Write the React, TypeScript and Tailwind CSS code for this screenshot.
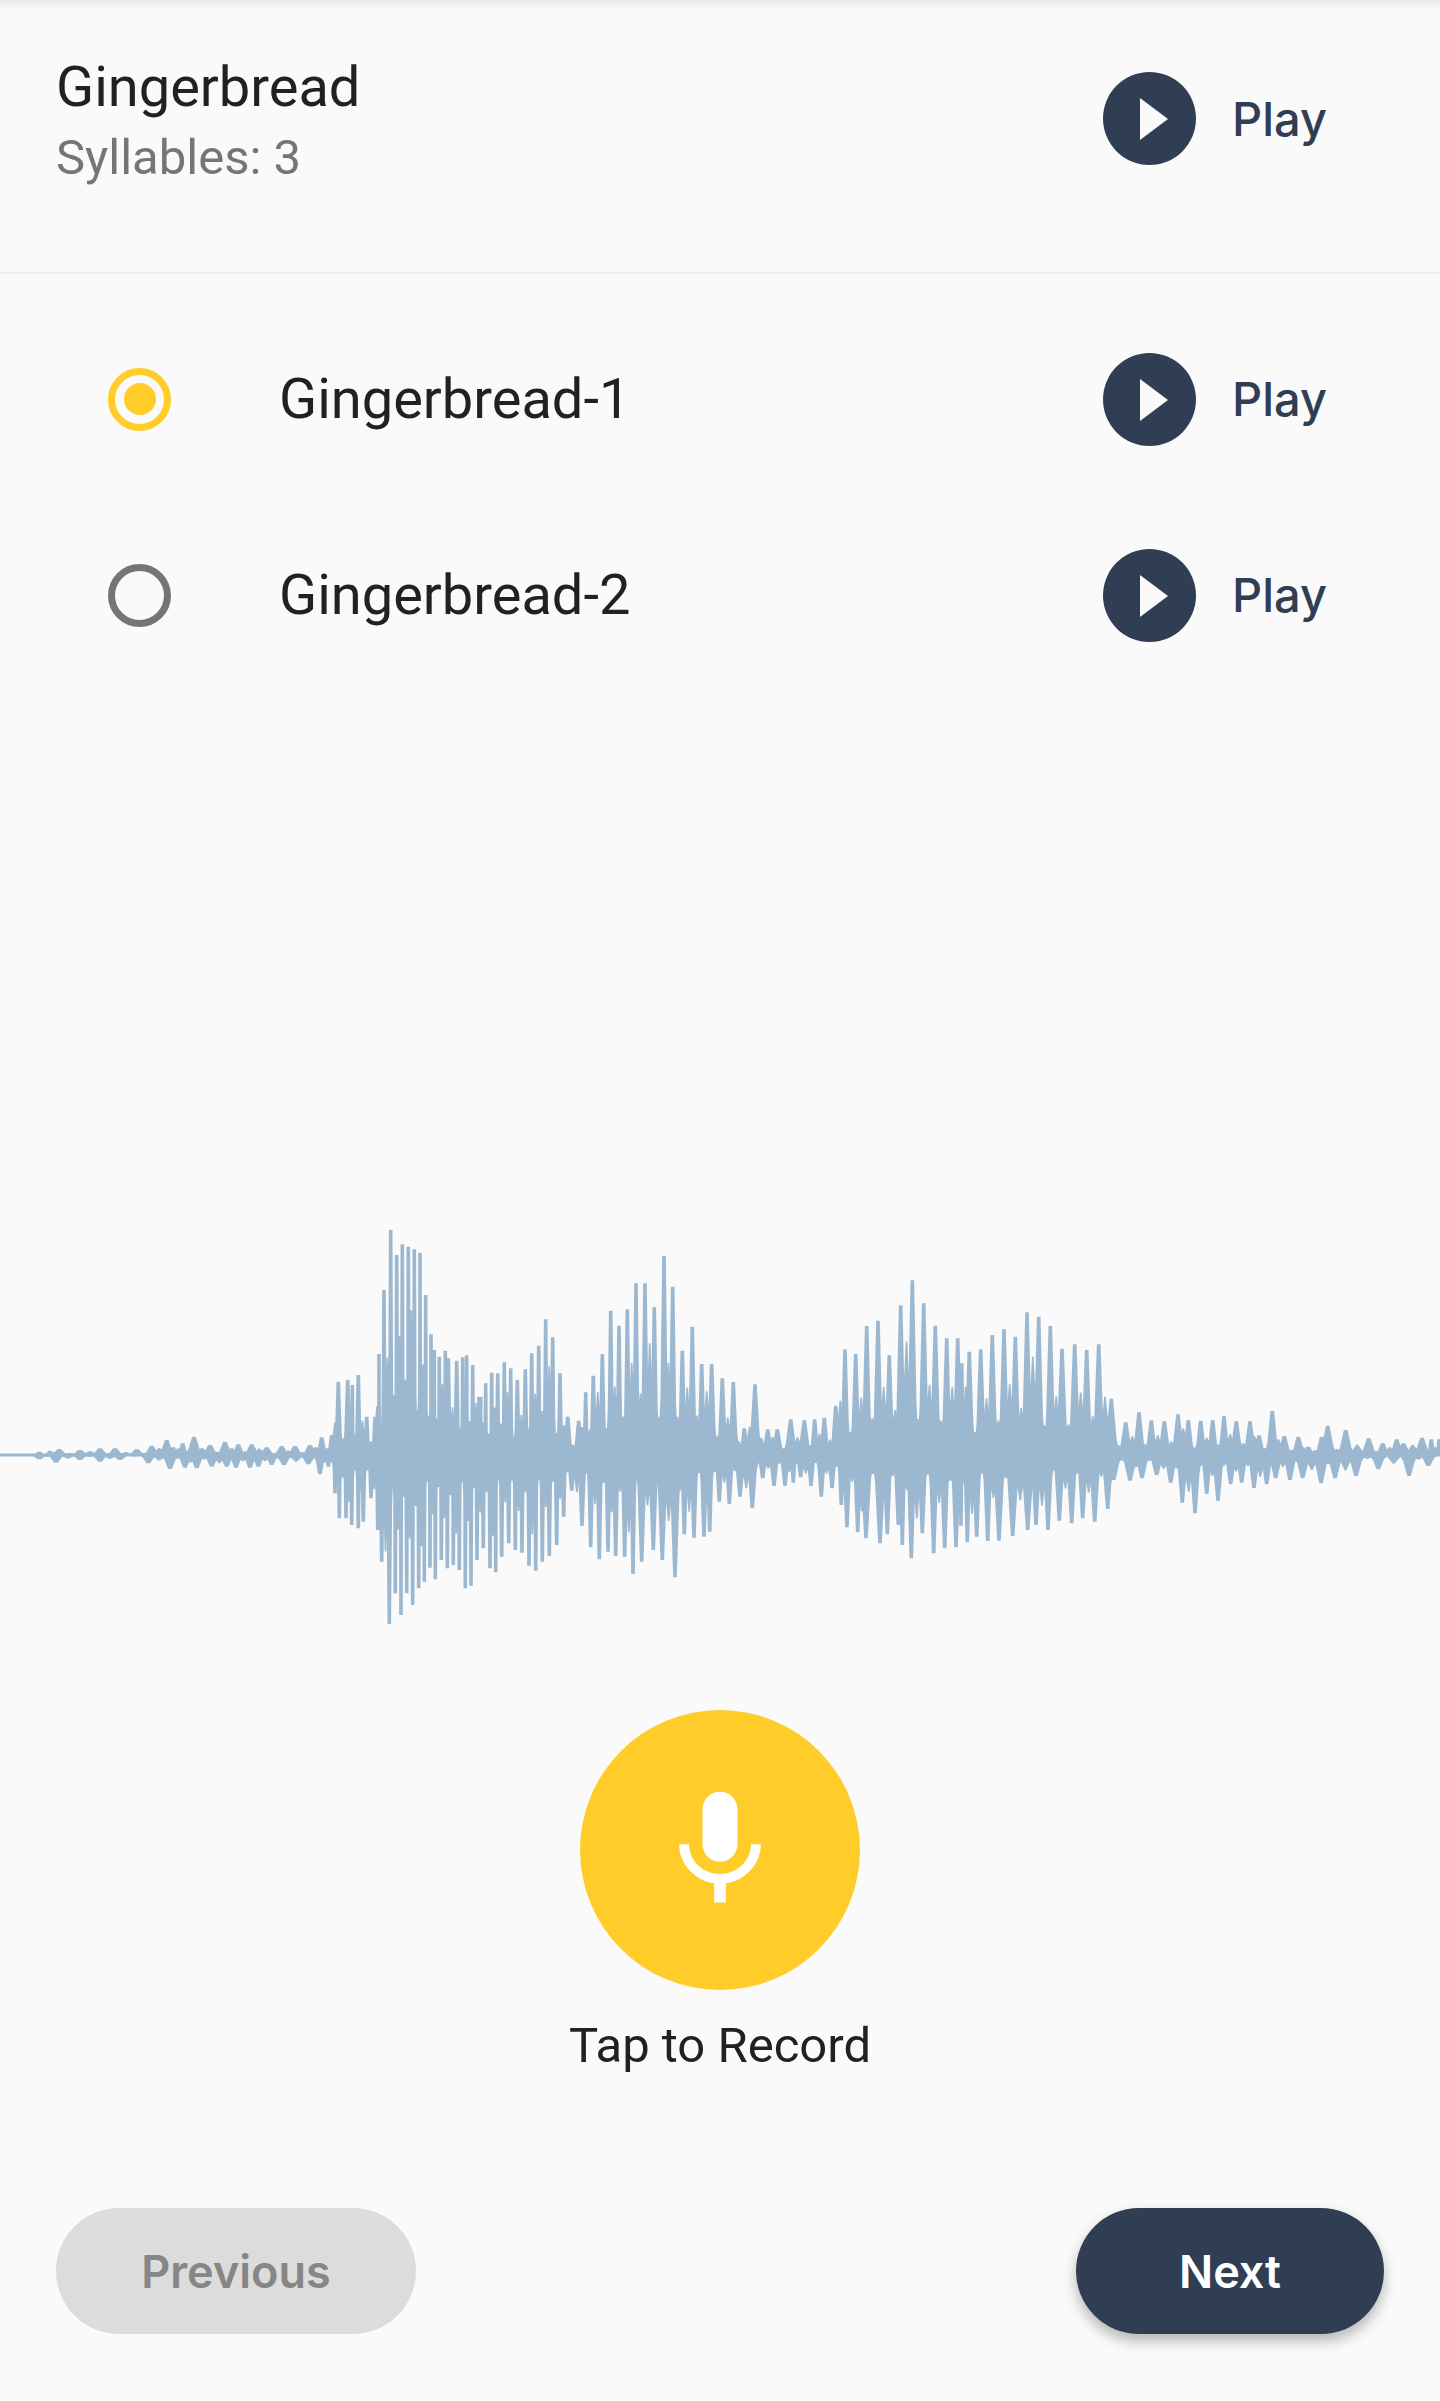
const WAVE_TOP: [number, number[]][] = [
  [0, [118,755,150,752,178,747,240,750,300,745,345,745,410,748,455,737,500,720,520,742,548,730,582,710,630,735,675,725,715,733,755,733,800,742,845,738,885,738,930,735,965,712,995,705,1015,545,1043,540,1057,555,1075,525,1100,650,1125,650,1137,462,1152,270,1172,90,1190,165,1207,133,1225,140,1243,148,1260,158,1277,285,1293,403,1303,450,1318,470,1336,452,1345,475,1370,482,1388,472,1400,466,1418,495,1437,590]],
  [480, [2,590,17,550,35,518,53,520,73,487,92,505,112,540,136,508,155,460,176,437,197,358,218,412,240,520,263,650,296,662,317,577,340,527,367,462,392,332,417,377,442,328,468,250,495,250,523,322,552,167,578,260,607,452,637,380,665,492,695,492,727,535,760,546,793,685,825,553,863,688,892,688,932,658,973,660,1004,658,1033,653,1067,617,1095,448,1127,462,1160,378,1194,362,1228,466,1262,316,1297,241,1331,310,1366,377,1400,415,1433,415]],
  [960, [5,490,28,455,62,448,97,405,132,388,166,410,201,337,236,350,271,378,306,446,344,433,380,450,416,433,454,596,497,667,537,637,574,661,613,664,654,643,685,660,722,662,758,660,792,648,829,664,870,664,897,706,937,632,973,708,1015,710,1045,740,1085,710,1103,677,1157,690,1226,715,1268,730,1310,718,1330,730,1386,713,1414,718,1437,718]],
]

const WAVE_BOTTOM: [number, number[]][] = [
  [0, [118,778,168,788,240,780,300,785,360,780,445,790,510,807,555,803,590,805,635,800,680,800,708,803,750,803,775,800,815,795,852,795,925,793,960,823,985,800,1005,880,1018,955,1038,955,1055,975,1075,985,1090,965,1113,895,1133,990,1145,1085,1168,1272,1186,1180,1203,1245,1220,1180,1238,1215,1256,1165,1273,1145,1290,1103,1306,1138,1324,1080,1342,1105,1360,1095,1378,1110,1396,1165,1413,1157,1431,1080]],
  [480, [10,1045,30,1105,47,1117,65,1070,86,1030,106,1050,126,1058,147,1097,167,1112,187,1085,208,1068,230,1035,251,950,275,872,306,978,332,1042,358,1078,384,1055,407,1068,434,1070,459,1122,485,1085,520,1050,547,1080,585,1132,613,1003,642,1013,672,1010,689,995,718,905,748,912,780,890,817,925,848,835,882,858,915,858,940,848,962,832,993,858,1024,890,1056,865,1084,915,1101,982,1133,997,1158,1015,1200,1030,1222,1003,1255,975,1267,1035,1294,1075,1327,1000,1361,1060,1394,1045,1428,1042]],
  [960, [3,977,22,1027,50,1010,83,1023,117,1022,158,1008,203,990,228,975,264,990,298,962,335,970,368,955,404,965,443,927,461,840,510,842,546,835,590,825,632,848,667,908,705,940,740,882,774,903,812,853,845,848,882,864,920,853,947,835,990,840,1028,835,1083,850,1125,835,1188,828,1255,808,1347,828,1405,798]],
]

// secondary peak heights, cycled so the body of the wave stays uneven
const SECONDARY = [0.28, 0.58, 0.36, 0.7, 0.22, 0.5]

// peaks were read off 3x crops, so turn them back into svg units
function peaks(parts: [number, number[]][]) {
  const out: { x: number; y: number }[] = []
  for (const [x0, list] of parts) {
    for (let i = 0; i < list.length; i += 2) {
      out.push({ x: x0 + list[i] / 3, y: list[i + 1] / 3 })
    }
  }
  return out
}

function spikes(parts: [number, number[]][]) {
  const mid = 255
  const list = peaks(parts)
  let d = ''
  list.forEach((p, i) => {
    const prev = list[i - 1] ?? p
    const next = list[i + 1] ?? p
    const gap = Math.min(Math.max(next.x - p.x, p.x - prev.x, 3), 16)
    const shoulder = mid + (p.y - mid) * 0.3
    const sw = Math.max(gap * 0.36, 1.9)
    d += `M${(p.x - gap * 0.6).toFixed(1)} ${mid}L${(p.x - sw).toFixed(1)} ${shoulder.toFixed(1)}L${(p.x - 1.8).toFixed(1)} ${p.y.toFixed(1)}L${(p.x + 1.8).toFixed(1)} ${p.y.toFixed(1)}L${(p.x + sw).toFixed(1)} ${shoulder.toFixed(1)}L${(p.x + gap * 0.6).toFixed(1)} ${mid}Z`
    // shorter secondary peak between the main ones
    if (next !== p) {
      const mx = (p.x + next.x) / 2
      const my = mid + ((p.y + next.y) / 2 - mid) * SECONDARY[i % SECONDARY.length]
      d += `M${(mx - gap * 0.5).toFixed(1)} ${mid}L${(mx - 0.8).toFixed(1)} ${my.toFixed(1)}L${(mx + 0.8).toFixed(1)} ${my.toFixed(1)}L${(mx + gap * 0.5).toFixed(1)} ${mid}Z`
    }
  })
  return d
}

function Waveform() {
  return (
    <svg className="block w-full h-[460px]" viewBox="0 0 1440 460">
      <rect x="0" y="253.5" width="1440" height="3" fill="#9bb8d0" />
      <path d={spikes(WAVE_TOP)} fill="#9bb8d0" />
      <path d={spikes(WAVE_BOTTOM)} fill="#9bb8d0" />
    </svg>
  )
}

function PlayButton() {
  return (
    <div className="w-[337px] flex items-center gap-[36px] shrink-0">
      <svg className="w-[93px] h-[93px] shrink-0" viewBox="0 0 93 93">
        <circle cx="46.5" cy="46.5" r="46.5" fill="#303e54" />
        <polygon points="37,26 65,47 37,68" fill="#fafafa" />
      </svg>
      <span className="font-[Inter] font-medium text-[47px] leading-[56px] text-[#303e54]">Play</span>
    </div>
  )
}

function Radio({ selected }: { selected?: boolean }) {
  return (
    <div
      className={`w-[63px] h-[63px] rounded-full border-[7px] flex items-center justify-center ${
        selected ? 'border-[#ffcc29]' : 'border-[#757575]'
      }`}
    >
      {selected && <div className="w-[32px] h-[32px] rounded-full bg-[#ffcc29]" />}
    </div>
  )
}

function SyllableRow({ label, selected }: { label: string; selected?: boolean }) {
  return (
    <div className="h-[196px] flex items-center justify-between pl-[108px]">
      <div className="flex items-center">
        <Radio selected={selected} />
        <span className="ml-[108px] text-[56px] leading-[66px] text-[#212121]">{label}</span>
      </div>
      <PlayButton />
    </div>
  )
}

export default function App() {
  return (
    <div className="relative w-full h-[2401px] overflow-hidden bg-[#fafafa] font-[Roboto]">
      <div className="absolute top-0 inset-x-0 h-[10px] bg-gradient-to-b from-[#e8e8e8] to-transparent" />

      <div className="h-[274px] flex items-start justify-between border-b-2 border-[#eeeeee] pl-[56px]">
        <div className="pt-[54px]">
          <div className="text-[56px] leading-[66px] text-[#212121]">Gingerbread</div>
          <div className="mt-[10px] text-[49px] leading-[56px] text-[#757575]">Syllables: 3</div>
        </div>
        <div className="mt-[72px]">
          <PlayButton />
        </div>
      </div>

      <div className="mt-[27px]">
        <SyllableRow label="Gingerbread-1" selected />
        <SyllableRow label="Gingerbread-2" />
      </div>

      <div className="mt-[507px]">
        <Waveform />
      </div>

      <div className="mt-[50px] flex flex-col items-center">
        <div className="w-[280px] h-[280px] rounded-full bg-[#ffcc29] flex items-center justify-center">
          <svg className="w-[140px] h-[140px]" viewBox="0 0 24 24" fill="#ffffff">
            <path d="M12 14c1.66 0 2.99-1.34 2.99-3L15 5c0-1.66-1.34-3-3-3S9 3.34 9 5v6c0 1.66 1.34 3 3 3zm5.3-3c0 3-2.54 5.1-5.3 5.1S6.7 14 6.7 11H5c0 3.41 2.72 6.23 6 6.72V21h2v-3.28c3.28-.48 6-3.3 6-6.72h-1.7z" />
          </svg>
        </div>
        <div className="mt-[28px] text-[49px] leading-[56px] text-[#212121]">Tap to Record</div>
      </div>

      <div className="mt-[134px] flex justify-between px-[56px]">
        <div className="w-[360px] h-[126px] pt-[2px] rounded-full bg-[#dcdcdc] flex items-center justify-center font-[Inter] font-semibold text-[45px] text-[#868686]">
          Previous
        </div>
        <div className="w-[308px] h-[126px] pt-[2px] rounded-full bg-[#303e54] flex items-center justify-center font-[Inter] font-semibold text-[45px] text-white shadow-[0_7px_14px_rgba(0,0,0,0.28)]">
          Next
        </div>
      </div>
    </div>
  )
}
